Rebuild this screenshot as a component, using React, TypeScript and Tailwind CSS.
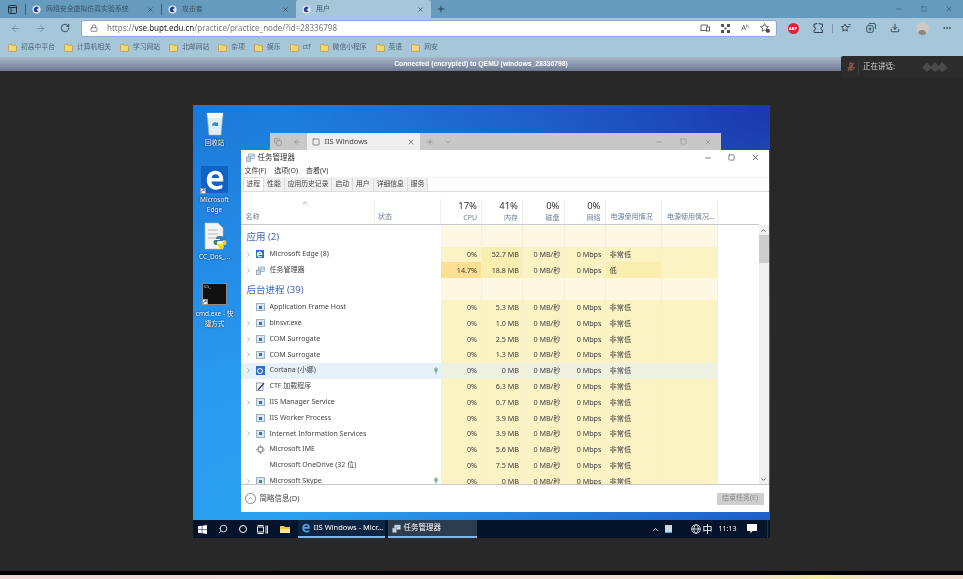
import React from "react";
import {
  ArrowLeft,
  ArrowRight,
  ChevronDown,
  ChevronRight,
  ChevronUp,
  Copy,
  Download,
  Lock,
  Minus,
  MoreHorizontal,
  Plus,
  RotateCw,
  Search,
  Square,
  X,
} from "lucide-react";

const FONT = "font-['Noto_Sans','Noto_Sans_CJK_SC',sans-serif]";
const COLS = "grid grid-cols-[134.5px_66px_41px_41px_41.5px_41px_56.5px_56px_40.5px]";

const bookmarks = ["初高中平台", "计算机相关", "学习网站", "北邮网站", "杂项", "娱乐", "ctf", "微信小程序", "英语", "网安"];

interface Proc {
  name: string;
  icon: "edge" | "tm" | "app" | "cortana" | "ctf" | "gear" | "none" | "skype";
  expand?: boolean;
  leaf?: boolean;
  cpu: string;
  mem: string;
  power: string;
  hover?: boolean;
  hot?: boolean;
  strongMem?: boolean;
}

const apps: Proc[] = [
  { name: "Microsoft Edge (8)", icon: "edge", expand: true, cpu: "0%", mem: "52.7 MB", power: "非常低", strongMem: true },
  { name: "任务管理器", icon: "tm", expand: true, cpu: "14.7%", mem: "18.8 MB", power: "低", hot: true },
];

const background: Proc[] = [
  { name: "Application Frame Host", icon: "app", cpu: "0%", mem: "5.3 MB", power: "非常低" },
  { name: "blnsvr.exe", icon: "app", expand: true, cpu: "0%", mem: "1.0 MB", power: "非常低" },
  { name: "COM Surrogate", icon: "app", expand: true, cpu: "0%", mem: "2.5 MB", power: "非常低" },
  { name: "COM Surrogate", icon: "app", expand: true, cpu: "0%", mem: "1.3 MB", power: "非常低" },
  { name: "Cortana (小娜)", icon: "cortana", expand: true, leaf: true, cpu: "0%", mem: "0 MB", power: "非常低", hover: true },
  { name: "CTF 加载程序", icon: "ctf", cpu: "0%", mem: "6.3 MB", power: "非常低" },
  { name: "IIS Manager Service", icon: "app", expand: true, cpu: "0%", mem: "0.7 MB", power: "非常低" },
  { name: "IIS Worker Process", icon: "app", cpu: "0%", mem: "3.9 MB", power: "非常低" },
  { name: "Internet Information Services", icon: "app", expand: true, cpu: "0%", mem: "3.9 MB", power: "非常低" },
  { name: "Microsoft IME", icon: "gear", cpu: "0%", mem: "5.6 MB", power: "非常低" },
  { name: "Microsoft OneDrive (32 位)", icon: "none", cpu: "0%", mem: "7.5 MB", power: "非常低" },
  { name: "Microsoft Skype", icon: "skype", expand: true, leaf: true, cpu: "0%", mem: "0 MB", power: "非常低" },
];

function EdgeGlyph({ size, color }: { size: number; color: string }) {
  return (
    <svg width={size} height={size} viewBox="0 0 24 24" className="shrink-0">
      <path
        fillRule="evenodd"
        fill={color}
        d="M3 12C3 6 7 2 12.500 2c5.500 0 8.500 4 8.500 9.500v2H8c.3 3 2.800 5 6 5 2.500 0 4.500-.7 6-1.700v4c-1.700 1-4 1.700-6.800 1.700C7 22.500 3 18 3 12zm5.200-2.200h8.300c0-2.600-1.600-4.200-4-4.200-2.300 0-3.900 1.700-4.300 4.200z"
      />
    </svg>
  );
}

function TabIcon() {
  return (
    <svg width="9" height="9" viewBox="0 0 10 10" className="shrink-0">
      <circle cx="5" cy="5" r="4.5" fill="#e8eef8" />
      <path d="M2 6a3.200 3.200 0 0 1 5.500-3L5 5.500 7.500 7A3.200 3.200 0 0 1 2 6z" fill="#2e3f9e" />
    </svg>
  );
}

function Tab({ title, active, w }: { title: string; active?: boolean; w: string }) {
  return (
    <div className={`${w} h-[18px] flex items-center pl-[6px] pr-[7px] gap-[5px] shrink-0 ${active ? "bg-[#a6c7da] rounded-t-[3px]" : ""}`}>
      <TabIcon />
      <span className="flex-1 text-[6.9px] text-[#39556a] truncate">{title}</span>
      <X size={7} strokeWidth={2} className="text-[#1f3442]" />
    </div>
  );
}

function FolderIcon() {
  return (
    <svg width="9" height="8" viewBox="0 0 10 9" className="shrink-0">
      <path d="M.5 2V1.200C.5.800.8.500 1.200.500h2.600l1 1h4c.4 0 .7.300.7.700v5.600c0 .4-.3.700-.7.700H1.200c-.4 0-.7-.3-.7-.7z" fill="#f6d476" stroke="#b78d2a" strokeWidth=".7" />
    </svg>
  );
}

function AppIcon({ kind }: { kind: Proc["icon"] }) {
  if (kind === "none") return <span className="w-[8px] h-[8px] shrink-0" />;
  if (kind === "edge")
    return (
      <span className="w-[8px] h-[8px] bg-[#2b6fc9] flex items-center justify-center shrink-0">
        <EdgeGlyph size={7} color="#fff" />
      </span>
    );
  if (kind === "cortana")
    return (
      <span className="w-[9px] h-[9px] bg-[#2b6fc9] flex items-center justify-center shrink-0">
        <span className="w-[6px] h-[6px] rounded-full border border-white" />
      </span>
    );
  if (kind === "ctf")
    return (
      <svg width="9" height="9" viewBox="0 0 9 9" className="shrink-0">
        <rect x="0.5" y="1" width="6.500" height="7.500" fill="#fff" stroke="#56607a" strokeWidth=".6" />
        <path d="M1.500 7.500 7.500.8l1 .8L3 8z" fill="#27367e" />
      </svg>
    );
  if (kind === "gear")
    return (
      <svg width="9" height="9" viewBox="0 0 9 9" className="shrink-0">
        <circle cx="4.500" cy="4.500" r="2.600" fill="none" stroke="#9aa0a6" strokeWidth="1.600" />
        <path d="M4.500 0v1.400M4.500 7.600V9M0 4.500h1.400M7.600 4.500H9" stroke="#9aa0a6" strokeWidth="1" />
      </svg>
    );
  if (kind === "tm")
    return (
      <svg width="9" height="9" viewBox="0 0 9 9" className="shrink-0">
        <rect x="2.500" y="1" width="6" height="4.500" fill="#dfe9f1" stroke="#7b93a5" strokeWidth=".6" />
        <rect x="0.5" y="4" width="4" height="4.500" fill="#c6d4de" stroke="#7b93a5" strokeWidth=".6" />
        <path d="M3.500 4 5 2.500l1 1 1.500-1.500" stroke="#3a8fc0" strokeWidth=".6" fill="none" />
      </svg>
    );
  return (
    <span className="w-[9px] h-[8px] bg-[#dde5ec] border border-[#9fb0bd] flex items-center pl-[2px] shrink-0">
      <span className={`w-[3px] h-[3px] ${kind === "skype" ? "bg-[#3d8f6d]" : "bg-[#2b6fc9]"}`} />
    </span>
  );
}

function LeafIcon() {
  return (
    <svg width="6" height="8" viewBox="0 0 6 9">
      <path d="M3 .5C5 1.500 5.500 4 3 6 .5 4 1 1.500 3 .5z" fill="#7cbf8f" stroke="#5aa672" strokeWidth=".5" />
      <path d="M3 3v5.500" stroke="#5aa672" strokeWidth=".7" />
    </svg>
  );
}

function GroupRow({ title, h }: { title: string; h: string }) {
  return (
    <div className={`${COLS} ${h} shrink-0`}>
      <div className="col-span-2 flex items-center pl-[6px] pt-[3px] text-[9.5px] text-[#3f68b5]">{title}</div>
      {[0, 1, 2, 3, 4, 5].map((i) => (
        <div key={i} className="bg-[#fdf7e3] border-r border-[#f6efd6]" />
      ))}
    </div>
  );
}

function ProcRow({ p }: { p: Proc }) {
  const heat = p.hover ? "bg-[#eef0e0]" : "bg-[#fcf3c4]";
  return (
    <div className={`${COLS} h-[15.8px] shrink-0 text-[7.2px] text-[#3c3c3c] ${p.hover ? "bg-[#e6f1fa]" : ""}`}>
      <div className="flex items-center min-w-0 pl-[6px]">
        <span className="w-[11px] shrink-0 -ml-[2px] pr-[2px]">{p.expand && <ChevronRight size={7} className="text-[#777]" />}</span>
        <span className="w-[14px] shrink-0 flex"><AppIcon kind={p.icon} /></span>
        <span className="truncate text-[#444] text-[7px]">{p.name}</span>
      </div>
      <div className="flex items-center justify-end pr-[2px]">{p.leaf && <LeafIcon />}</div>
      <div className={`flex items-center justify-end pr-[4px] border-r border-[#f6efd6] ${p.hot ? "bg-[#fbdf92]" : heat}`}>{p.cpu}</div>
      <div className={`flex items-center justify-end pr-[3px] border-r border-[#f6efd6] ${p.hot || p.strongMem ? "bg-[#f8eeb0]" : heat}`}>{p.mem}</div>
      <div className={`flex items-center justify-end pr-[3px] border-r border-[#f6efd6] ${heat}`}>0 MB/秒</div>
      <div className={`flex items-center justify-end pr-[3px] border-r border-[#f6efd6] ${heat}`}>0 Mbps</div>
      <div className={`flex items-center pl-[4px] border-r border-[#f6efd6] ${p.hot ? "bg-[#f8eeb0]" : heat}`}>{p.power}</div>
      <div className={`${heat} border-r border-[#f6efd6]`} />
      <div className="bg-white" />
    </div>
  );
}

function HeaderCell({ pct, label }: { pct: string; label: string }) {
  return (
    <div className="flex flex-col items-end justify-end pr-[4px] pb-[1px] border-r border-[#eeeeee]">
      <span className="text-[9.5px] leading-[13px] text-[#333]">{pct}</span>
      <span className="text-[7px] leading-[11px] text-[#6d7f92]">{label}</span>
    </div>
  );
}

function TaskManager() {
  const tabs = ["进程", "性能", "应用历史记录", "启动", "用户", "详细信息", "服务"];
  return (
    <div className="absolute left-[48px] top-[45px] w-[528px] h-[362px] bg-white flex flex-col">
      <div className="h-[15px] flex items-center shrink-0 pl-[5px]">
        <AppIcon kind="tm" />
        <span className="ml-[3px] text-[7.5px] text-[#333]">任务管理器</span>
        <div className="ml-auto flex items-center gap-[16px] pr-[9px] text-[#333]">
          <Minus size={8} />
          <Square size={7} />
          <X size={9} />
        </div>
      </div>
      <div className="h-[13px] flex items-center gap-[8px] pl-[4px] text-[7px] text-[#333] shrink-0 border-b border-[#f2f2f2]">
        <span>文件(F)</span>
        <span>选项(O)</span>
        <span>查看(V)</span>
      </div>
      <div className="h-[14px] flex items-end pl-[2px] border-b border-[#dcdcdc] text-[6.8px] text-[#444] shrink-0">
        {tabs.map((t, i) => (
          <span
            key={t}
            className={i === 0 ? "h-[14px] px-[3px] flex items-center bg-white border border-b-0 border-[#dcdcdc]" : "h-[13px] px-[3px] flex items-center bg-[#f0f0f0] border-r border-[#dcdcdc]"}
          >
            {t}
          </span>
        ))}
      </div>
      <div className="flex-1 flex min-h-0">
        <div className="flex-1 min-w-0 flex flex-col overflow-hidden">
          <div className={`${COLS} h-[33px] pt-[7px] border-b border-[#c9c9c9] shrink-0`}>
            <div className="relative flex items-end pl-[5px] pb-[2px] text-[7px] text-[#6d7f92] border-r border-[#eeeeee]">
              <ChevronUp size={8} className="absolute left-[60px] top-0 text-[#888]" />
              名称
            </div>
            <div className="flex items-end pl-[3px] pb-[2px] text-[7px] text-[#6d7f92] border-r border-[#eeeeee]">状态</div>
            <HeaderCell pct="17%" label="CPU" />
            <HeaderCell pct="41%" label="内存" />
            <HeaderCell pct="0%" label="磁盘" />
            <HeaderCell pct="0%" label="网络" />
            <div className="flex items-end pl-[5px] pb-[2px] text-[7px] text-[#6d7f92] border-r border-[#eeeeee]">电源使用情况</div>
            <div className="flex items-end pl-[5px] pb-[2px] text-[7px] text-[#6d7f92] border-r border-[#eeeeee] whitespace-nowrap">电源使用情况...</div>
            <div />
          </div>
          <div className="flex flex-col min-h-0 overflow-hidden">
            <GroupRow title="应用 (2)" h="h-[21.5px]" />
            {apps.map((p) => (
              <ProcRow key={p.name} p={p} />
            ))}
            <GroupRow title="后台进程 (39)" h="h-[21.5px]" />
            {background.map((p, i) => (
              <ProcRow key={i} p={p} />
            ))}
          </div>
        </div>
        <div className="w-[10px] bg-[#f0f0f0] flex flex-col items-center shrink-0 mt-[33px]">
          <ChevronUp size={7} strokeWidth={3} className="text-[#555] mt-[2px]" />
          <div className="w-full h-[28px] bg-[#cdcdcd] mt-[1px]" />
          <ChevronDown size={7} strokeWidth={3} className="text-[#555] mt-auto mb-[1px]" />
        </div>
      </div>
      <div className="h-[28px] border-t border-[#c9c9c9] flex items-center justify-between pl-[4px] pr-[5px] shrink-0">
        <div className="flex items-center gap-[4px] text-[7.5px] text-[#444]">
          <span className="w-[11px] h-[11px] rounded-full border border-[#888] flex items-center justify-center">
            <ChevronUp size={7} className="text-[#777]" />
          </span>
          简略信息(D)
        </div>
        <div className="w-[47px] h-[12px] bg-[#cfcfcf] flex items-center justify-center text-[7px] text-[#8b8b8b]">结束任务(E)</div>
      </div>
    </div>
  );
}

function IisWindow() {
  return (
    <div className="absolute left-[77px] top-[28px] w-[451px] h-[17px] bg-[#c8c8c8] flex items-center">
      <div className="flex items-center gap-[11px] pl-[4px] pr-[6px] text-[#888]">
        <Copy size={8} />
        <ArrowLeft size={8} />
      </div>
      <div className="w-[113px] h-full bg-[#eeeeee] flex items-center pl-[5px] pr-[5px] gap-[5px] text-[7.5px] text-[#444]">
        <Square size={8} className="text-[#555]" />
        <span className="flex-1">IIS Windows</span>
        <X size={8} className="text-[#555]" />
      </div>
      <Plus size={8} className="ml-[6px] text-[#888]" />
      <ChevronDown size={8} className="ml-[10px] text-[#888]" />
      <div className="ml-auto flex items-center gap-[17px] pr-[9px] text-[#888]">
        <Minus size={8} />
        <Square size={7} />
        <X size={8} />
      </div>
    </div>
  );
}

function DesktopIcon({ label, top, children }: { label: string; top: string; children: React.ReactNode }) {
  return (
    <div className={`absolute left-0 ${top} w-[44px] flex flex-col items-center`}>
      {children}
      <span className="mt-[2px] text-[6.5px] leading-[10px] text-white text-center whitespace-pre-line [text-shadow:0_0_2px_#000]">{label}</span>
    </div>
  );
}

function Shortcut() {
  return (
    <span className="absolute -left-[1px] -bottom-[1px] w-[6px] h-[6px] bg-white border border-[#999] flex items-center justify-center">
      <svg width="4" height="4" viewBox="0 0 4 4" fill="none" stroke="#1f4ea0" strokeWidth=".8"><path d="M.5 3.500C.5 2 1.500 1 3.500 1M2.200.2 3.500 1 2.200 2" /></svg>
    </span>
  );
}

function Desktop() {
  return (
    <div className="relative w-[577px] h-[433px] bg-[linear-gradient(160deg,#1b78d8_0%,#2a9af0_45%,#2aa0ee_70%,#1d56c4_100%)] overflow-hidden">
      <div className="absolute inset-0 bg-[radial-gradient(ellipse_at_top_right,#1c37ad,transparent_60%)]" />
      <DesktopIcon label="回收站" top="top-[5px]">
        <svg width="22" height="26" viewBox="0 0 22 26">
          <path d="M3 3h16l-2 22H5z" fill="#e4edf2" stroke="#9fb2bd" strokeWidth=".6" />
          <path d="M3 3h16l-1 5H4z" fill="#f7fafb" />
          <path d="M8 15a3 3 0 0 1 5-2l1-1v4h-4l1-1a1.600 1.600 0 0 0-2 1.500z" fill="#2a8fd0" />
        </svg>
      </DesktopIcon>
      <DesktopIcon label={"Microsoft\nEdge"} top="top-[61px]">
        <div className="relative w-[27px] h-[27px] bg-[#0f62c6] flex items-center justify-center">
          <EdgeGlyph size={22} color="#fff" />
          <Shortcut />
        </div>
      </DesktopIcon>
      <DesktopIcon label="CC_Dos_..." top="top-[117px]">
        <svg width="26" height="28" viewBox="0 0 26 28">
          <path d="M3 1h13l5 5v21H3z" fill="#f5f5f5" stroke="#c0c0c0" strokeWidth=".6" />
          <path d="M6 8h10M6 12h10M6 16h8" stroke="#aaa" strokeWidth=".8" />
          <path d="M18 14c-4 0-4 2-4 3h4v1h-5c-2 0-2 5 1 5h1v-2c0-2 1-2 3-2h3c1 0 2-1 2-2v-1c0-1-2-2-5-2z" fill="#3a7ab0" />
          <path d="M18 27c4 0 4-2 4-3h-4v-1h5c2 0 2-5-1-5h-1v2c0 2-1 2-3 2h-3" fill="#f4c83e" />
        </svg>
      </DesktopIcon>
      <DesktopIcon label={"cmd.exe - 快\n捷方式"} top="top-[178px]">
        <div className="relative w-[25px] h-[22px] mb-[2px] bg-[#111] border border-[#888] text-[4px] leading-[5px] text-white pl-[1px]">
          C:\_
          <Shortcut />
        </div>
      </DesktopIcon>
      <IisWindow />
      <TaskManager />
      <div className="absolute left-0 right-0 bottom-0 h-[18px] bg-[#06142b] flex items-center text-white">
        <div className="w-[20px] flex justify-center">
          <svg width="9" height="9" viewBox="0 0 10 10" fill="#fff">
            <path d="M0 1.400 4.200.8v3.900H0zM4.800.7 10 0v4.700H4.800zM0 5.300h4.200v3.900L0 8.600zM4.800 5.300H10V10l-5.200-.7z" />
          </svg>
        </div>
        <div className="w-[20px] flex justify-center"><Search size={10} className="-scale-x-100" /></div>
        <div className="w-[20px] flex justify-center"><span className="w-[8px] h-[8px] rounded-full border-[1.5px] border-white" /></div>
        <div className="w-[20px] flex justify-center">
          <svg width="11" height="9" viewBox="0 0 11 9" fill="none" stroke="#fff" strokeWidth=".9">
            <rect x=".5" y="2" width="6" height="5" />
            <path d="M.5.500h6M.5 8.500h6M9 .5v8M10.500 .5v8" />
          </svg>
        </div>
        <div className="w-[25px] flex justify-center">
          <svg width="10" height="9" viewBox="0 0 10 9"><path d="M0 1h4l1 1h5v6H0z" fill="#f5c542" /><rect x="0" y="4" width="10" height="4" fill="#ffe28a" /></svg>
        </div>
        <div className="w-[87px] h-[18px] flex items-center gap-[3px] pl-[3px] border-b-2 border-[#7fb5e6] bg-[#0d2442]">
          <EdgeGlyph size={10} color="#4aa3ec" />
          <span className="text-[7.5px] truncate">IIS Windows - Micr...</span>
        </div>
        <div className="w-[89px] h-[18px] ml-[3px] flex items-center gap-[3px] pl-[4px] border-b-2 border-[#7fb5e6] bg-[#2e3d4e]">
          <AppIcon kind="tm" />
          <span className="text-[7.5px]">任务管理器</span>
        </div>
        <div className="ml-auto flex items-center">
          <ChevronUp size={9} />
          <span className="w-[7px] h-[8px] bg-[#cfd8df] border-b border-[#4aa3ec] ml-[5.5px]" />
          <svg width="10" height="10" viewBox="0 0 10 10" fill="none" stroke="#fff" strokeWidth=".8" className="ml-[18.5px]">
            <circle cx="5" cy="5" r="4.300" />
            <path d="M.7 5h8.600M5 .7c-3 2.500-3 6 0 8.600M5 .7c3 2.500 3 6 0 8.600" />
          </svg>
          <span className="text-[10px] ml-[2px] leading-none">中</span>
          <span className="text-[7px] ml-[6px]">11:13</span>
          <svg width="10" height="10" viewBox="0 0 10 10" fill="#fff" className="ml-[10px]">
            <path d="M0 0h10v7H5.500L3.500 9.500V7H0z" />
          </svg>
          <span className="w-px h-[18px] bg-[#1d3555] ml-[10px] mr-[2px]" />
        </div>
      </div>
    </div>
  );
}

export default function App() {
  return (
    <div className={`${FONT} w-[963px] h-[579px] overflow-hidden relative flex flex-col bg-[#282828] blur-[0.5px]`}>
      <div className="h-[18px] bg-[#669bbd] flex items-center shrink-0">
        <div className="w-[25px] flex justify-center">
          <svg width="9" height="9" viewBox="0 0 9 9" fill="none" stroke="#20303c" strokeWidth="1"><rect x=".5" y=".5" width="8" height="8" rx="1" /><path d="M.5 2.500h8M3 2.500v6" /></svg>
        </div>
        <span className="w-px h-[11px] bg-[#3c5e75]" />
        <Tab title="网络安全虚拟仿真实验系统" w="w-[135px]" />
        <span className="w-px h-[11px] bg-[#3c5e75]" />
        <Tab title="攻击者" w="w-[134px]" />
        <Tab title="用户" active w="w-[135px]" />
        <Plus size={10} className="ml-[5px] text-[#1f3442]" />
        <div className="ml-auto flex items-center gap-[18px] pr-[10px] text-[#36566c]">
          <Minus size={8} />
          <Square size={6} />
          <X size={8} />
        </div>
      </div>
      <div className="h-[20px] bg-[#a6c7da] flex items-center shrink-0">
        <ArrowLeft size={11} className="ml-[9.5px] text-[#6e8ea3]" />
        <ArrowRight size={11} className="ml-[14px] text-[#6e8ea3]" />
        <RotateCw size={10} className="ml-[14.5px] text-[#24343f]" />
        <div className="ml-[11px] w-[696px] h-[17px] bg-white rounded-[3px] border border-[#8fa9d6] flex items-center pl-[8px] pr-[6px]">
          <Lock size={8} className="text-[#555]" />
          <span className="ml-[9px] text-[8px] text-[#7a7a7a]">https://<span className="text-[#222]">vse.bupt.edu.cn</span>/practice/practice_node/?id=28336798</span>
          <div className="ml-auto flex items-center gap-[11px] text-[#555]">
            <svg width="10" height="8" viewBox="0 0 10 8" fill="none" stroke="#444" strokeWidth=".8"><path d="M1 6V1h6.500v1.500M.2 6.500H6" /><rect x="6.500" y="3" width="3" height="4" /></svg>
            <svg width="9" height="9" viewBox="0 0 9 9" fill="#555"><path d="M0 0h3v3H0zM6 0h3v3H6zM0 6h3v3H0zM6 6h3v3H6zM3.500 3.500h2v2h-2z" /></svg>
            <span className="text-[7.5px] leading-none">Aʰ</span>
            <svg width="10" height="10" viewBox="0 0 10 10" fill="none" stroke="#444" strokeWidth=".8"><path d="m4.500.6 1.200 2.600 2.800.3-2 2 .5 2.800-2.500-1.400L2 8.300l.5-2.800-2-2 2.800-.3z" /><circle cx="7.800" cy="7.800" r="1.700" fill="#444" /></svg>
          </div>
        </div>
        <span className="ml-[10.5px] w-[11px] h-[11px] rounded-full bg-[#d4253a] text-white text-[4px] leading-[11px] font-bold text-center">ABP</span>
        <svg width="10" height="10" viewBox="0 0 10 10" fill="none" stroke="#24343f" strokeWidth=".9" className="ml-[14.5px]"><path d="M3.500 1a1.500 1.500 0 0 1 3 0h3v3a1.500 1.500 0 0 0 0 3v2.500H1V7a1.500 1.500 0 0 0 0-3V1z" /></svg>
        <span className="ml-[9px] w-px h-[9px] bg-[#7d98aa]" />
        <svg width="10" height="10" viewBox="0 0 10 10" fill="none" stroke="#24343f" strokeWidth=".8" className="ml-[8px]"><path d="m4 1 1.100 2.400 2.600.3-1.900 1.800.5 2.600L4 6.800 1.700 8.100l.5-2.600L.3 3.700l2.600-.3zM7.500 1.500h2M8.500 3.500h1" /></svg>
        <svg width="10" height="10" viewBox="0 0 10 10" fill="none" stroke="#24343f" strokeWidth=".8" className="ml-[15px]"><path d="M2.500 1.500A1.500 1.500 0 0 1 4 .5h4A1.500 1.500 0 0 1 9.500 2v4" /><rect x=".7" y="2.700" width="6.600" height="6.600" rx="1.500" /><path d="M4 4.500v3M2.500 6h3" /></svg>
        <Download size={10} className="ml-[14px] text-[#24343f]" />
        <span className="ml-[15.5px] w-[13px] h-[13px] rounded-full bg-[#cfc8c2] flex items-end justify-center overflow-hidden">
          <span className="w-[8px] h-[5px] rounded-t-full bg-[#8d8580]" />
        </span>
        <MoreHorizontal size={10} className="ml-[13.5px] text-[#24343f]" />
      </div>
      <div className="h-[19px] bg-[#a6c7da] flex items-center pl-[8px] shrink-0">
        {bookmarks.map((b) => (
          <div key={b} className="flex items-center gap-[4px] mr-[9px]">
            <FolderIcon />
            <span className="text-[6.8px] text-[#4e6575]">{b}</span>
          </div>
        ))}
      </div>
      <div className="h-[14px] bg-[linear-gradient(#a8b6c8,#6d7990)] flex items-center justify-center pr-[1px] text-[6.8px] font-bold text-white shrink-0 font-['Liberation_Sans',sans-serif]">
        Connected (encrypted) to QEMU (windows_28336798)
      </div>
      <div className="flex-1 flex justify-center items-start pt-[34px] pr-[1px]">
        <Desktop />
      </div>
      <div className="h-[4px] bg-black shrink-0" />
      <div className="h-[4px] bg-[linear-gradient(90deg,#efd8d8,#f2e0d8_78%,#f5eea0_85%,#f2e0d8_92%)] shrink-0" />
      <div className="absolute right-0 top-[56px] w-[122px] h-[21px] bg-[#2c2c2c] rounded-tl-[2px] flex items-center pl-[6px] text-[7.5px] text-[#d8d8d8]">
        <svg width="8" height="10" viewBox="0 0 8 10"><path d="M3 1h2v5H3zM1 5c0 2 1.500 3 3 3s3-1 3-3" stroke="#9a6a5a" fill="none" /><path d="M1 9 7 1" stroke="#b05a4a" /></svg>
        <span className="w-px h-[14px] bg-[#3d3d3d] ml-[3px]" />
        <span className="ml-[4px]">正在讲话:</span>
        <svg width="26" height="10" viewBox="0 0 26 10" className="ml-[27px]" fill="#4a4a4a"><path d="M0 6 5 0l5 6-5 4zM8 6l5-6 5 6-5 4zM15 6l5-6 6 6-6 4z" /></svg>
      </div>
    </div>
  );
}
